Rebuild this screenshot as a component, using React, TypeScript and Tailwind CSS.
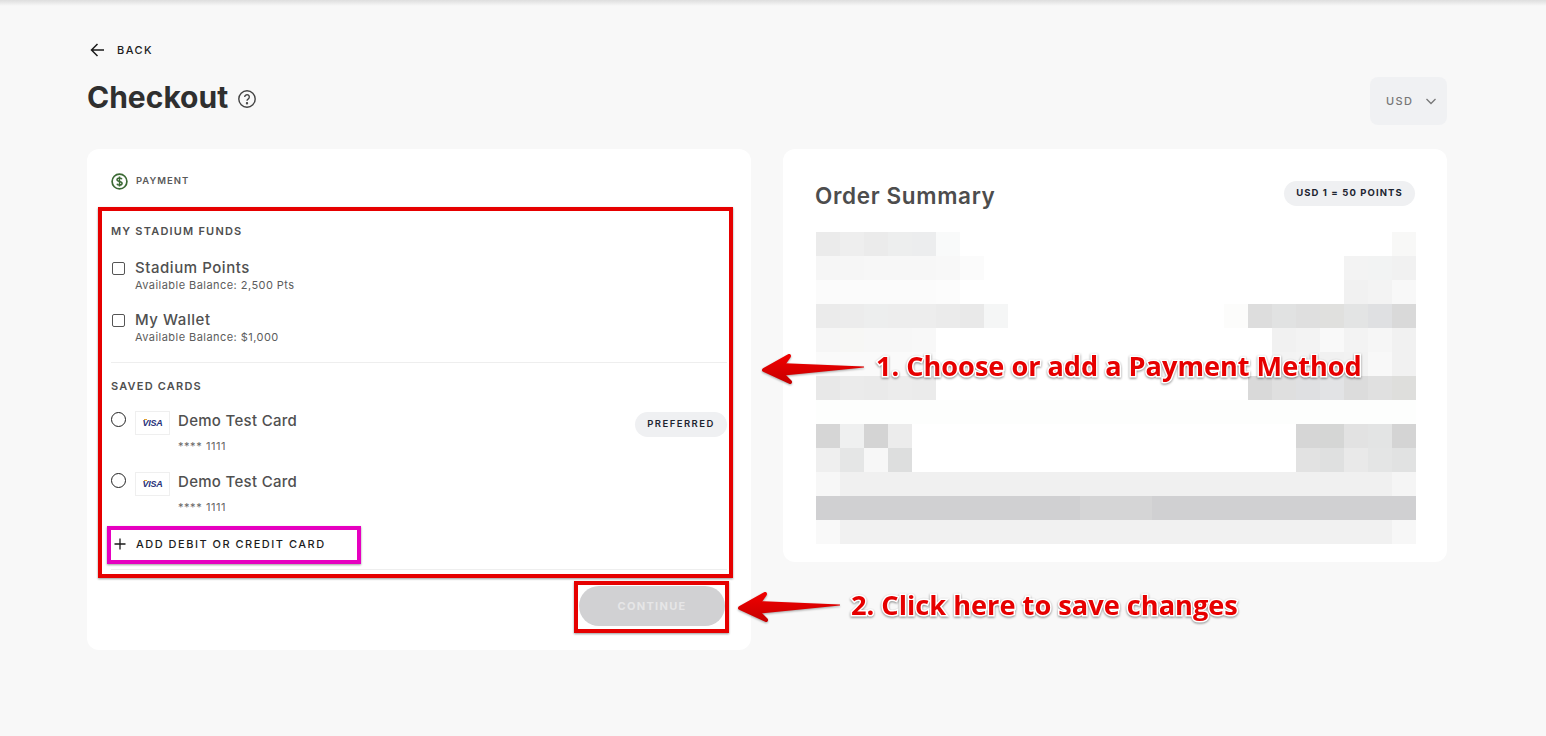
import { FC } from "react";

const FONT = "font-['Inter','Noto_Sans',sans-serif]";

// blurred order lines: [row, first column, colours...]
const MOSAIC: [number, number, string[]][] = [
   [0, 0, ["#ebebeb", "#eeeeee", "#ebebeb", "#edeeee", "#ecedee", "#f9fafa"]],
   [0, 24, ["#f8f8f7"]],
   [1, 0, ["#f6f6f6", "#f6f6f6", "#f7f7f7", "#f7f7f7", "#f7f7f7", "#f8f8f8", "#fbfbfb"]],
   [1, 22, ["#f3f3f3", "#f2f3f3", "#f1f1f1"]],
   [2, 0, ["#fbfbfb", "#fbfbfb", "#fbfbfb", "#fbfbfb", "#fbfbfb", "#fcfcfc"]],
   [2, 22, ["#f1f1f1", "#f3f3f3", "#f8f8f8"]],
   [3, 0, ["#ebebeb", "#ececec", "#edeeee", "#ededed", "#ededed", "#ebebeb", "#e9e9e9", "#f5f6f6"]],
   [3, 17, ["#fcfcfb", "#dddddd", "#e1e2e2", "#dfdfdf", "#e0e0de", "#e3e4e4", "#dfe0e2", "#d9d9d9"]],
   [4, 0, ["#f6f6f6", "#f7f7f5", "#f7f7f7", "#f7f7f7", "#f8f8f8"]],
   [4, 19, ["#f1f1f1", "#f3f3f3", "#f9f9f9", "#f3f3f3", "#f6f6f6", "#f1f1f1"]],
   [5, 0, ["#fafafa", "#fafafa", "#fafafa", "#fafafa", "#fbfbfb"]],
   [5, 19, ["#f3f3f3", "#f4f4f4", "#f1f1f1", "#f2f2f2", "#f8f8f8", "#f1f1f1"]],
   [6, 0, ["#e8e8e8", "#ebebeb", "#eaeaea", "#ececec", "#ebebeb"]],
   [6, 18, ["#d9d9d9", "#dfdfdf", "#dfe0e2", "#e2e3e5", "#dcdcdc", "#e0e0e0", "#dededc"]],
   [7, 0, Array(25).fill("#fdfefd")],
   [8, 0, ["#d6d6d6", "#eff0f0", "#d4d4d4", "#ececec"]],
   [8, 20, ["#d6d6d6", "#d5d6d5", "#e2e2e2", "#e3e4e4", "#d4d4d4"]],
   [9, 0, ["#efefef", "#e5e6e6", "#f7f7f7", "#dddede"]],
   [9, 20, ["#e2e2e2", "#dfe0e0", "#e9e9e9", "#e4e5e5", "#e1e2e2"]],
   [10, 0, ["#f7f7f7", ...Array(23).fill("#f0f0f0"), "#f5f5f5"]],
   [11, 0, [...Array(11).fill("#d0d0d2"), "#d5d5d6", "#d5d5d6", "#d5d5d6", ...Array(11).fill("#d0d0d2")]],
   [12, 0, ["#f9f9f9", ...Array(23).fill("#f1f1f1"), "#f7f7f7"]],
];

const Mosaic: FC = () => (
   <svg width="600" height="312" viewBox="0 0 600 312" className="block" shapeRendering="crispEdges">
      {MOSAIC.map(([row, start, colours]) =>
         colours.map((c, i) => <rect key={`${row}-${start}-${i}`} x={(start + i) * 24} y={row * 24} width="24" height="24" fill={c} />)
      )}
   </svg>
);

const SectionLabel: FC<{ text: string }> = ({ text }) => (
   <div className="text-[11px] leading-4 font-semibold tracking-[1.2px] text-[#4f4f4f]">{text}</div>
);

const FundRow: FC<{ name: string; balance: string }> = ({ name, balance }) => (
   <div className="flex items-start h-[52px]">
      <div className="w-[13px] h-[13px] mt-[3px] ml-[1px] mr-[10px] rounded-[2px] border-[1.5px] border-[#555555]" />
      <div>
         <div className="text-[15px] leading-[18px] font-medium tracking-[0.55px] text-[#505050]">{name}</div>
         <div className="text-[11px] leading-4 tracking-[0.45px] text-[#5c5c5c]">{balance}</div>
      </div>
   </div>
);

const CardRow: FC<{ preferred?: boolean }> = ({ preferred }) => (
   <div className="flex items-start h-[61px]">
      <div className="w-[15px] h-[15px] mt-[1px] mr-[9px] rounded-full border-[1.5px] border-[#222222]" />
      <div className="relative w-[35px] h-[24px] border border-[#efefef] flex items-center justify-center mr-2">
         <span className="text-[9px] leading-none font-bold italic tracking-[-0.2px] text-[#27327a] font-['Liberation_Sans',sans-serif]">VISA</span>
         <span className="absolute left-[8px] top-[7px] w-[3px] h-[1px] bg-[#e0a030]" />
      </div>
      <div>
         <div className="text-[15px] leading-[18px] font-medium tracking-[0.3px] text-[#505050] mt-[1px]">Demo Test Card</div>
         <div className="text-[11px] leading-4 tracking-[0.55px] text-[#666666] mt-[8px]">**** 1111</div>
      </div>
      {preferred && (
         <div className="ml-auto mt-[1px] h-[25px] w-[92px] rounded-full bg-[#eff0f2] flex items-center justify-center text-[9.5px] font-semibold tracking-[1.45px] text-[#1d2430]">
            PREFERRED
         </div>
      )}
   </div>
);

const Arrow: FC<{ x: number; y: number; tail: number; id: string }> = ({ x, y, tail, id }) => (
   <g transform={`translate(${x} ${y})`} className="[filter:drop-shadow(0_1px_1px_rgba(0,0,0,0.35))]">
      <defs>
         <linearGradient id={id} gradientUnits="userSpaceOnUse" x1="0" y1="-16" x2="0" y2="15">
            <stop offset="0" stopColor="#f20000" />
            <stop offset="1" stopColor="#c40000" />
         </linearGradient>
      </defs>
      <path d={`M18 -7L${tail} -3.500L${tail} -2.500L18 6z`} fill={`url(#${id})`} />
      <path d="M3 0L28 -14L21 -4L21 4L29 12z" fill={`url(#${id})`} stroke={`url(#${id})`} strokeWidth="4" strokeLinejoin="round" />
   </g>
);

const App: FC = () => {
   return (
      <div className={`relative min-h-[736px] bg-[#f8f8f8] overflow-hidden ${FONT}`}>
         <div className="h-[6px] bg-linear-to-b from-[#dedede] to-[#f8f8f8]" />
         <div className="w-[1360px] ml-[87px]">
            <div className="flex items-center h-[16px] mt-[36px]">
               <svg width="20" height="20" viewBox="0 0 20 20" fill="none" stroke="#1a1a1a" strokeWidth="1.5" className="ml-[1px]">
                  <path d="M16 10H3.5M9.5 4l-6 6 6 6" />
               </svg>
               <span className="ml-[9px] text-[11px] font-medium tracking-[1.45px] text-[#1c1c1c]">BACK</span>
            </div>
            <div className="flex items-start justify-between h-[76px] mt-[15px]">
               <div className="flex items-center h-[48px]">
                  <h1 className="text-[30px] leading-[40px] font-bold text-[#2f2f2f]">Checkout</h1>
                  <svg width="20" height="20" viewBox="0 0 20 20" fill="none" stroke="#444444" strokeWidth="1.4" className="ml-[9px] mt-[3px]">
                     <circle cx="10" cy="10" r="8.2" />
                     <path d="M7.7 8a2.3 2.3 0 1 1 3.6 1.9c-.8.5-1.3 1-1.3 1.9" />
                     <circle cx="10" cy="14.2" r=".5" fill="#444444" />
                  </svg>
               </div>
               <div className="w-[77px] h-[48px] mt-[4px] rounded-lg bg-[#f0f1f3] flex items-center pl-[16px] text-[11px] font-medium tracking-[1.4px] text-[#777777]">
                  USD
                  <svg width="12" height="12" viewBox="0 0 12 12" fill="none" stroke="#777777" strokeWidth="1.3" className="ml-[12px]">
                     <path d="M1.5 4l4.5 4.5L10.500 4" />
                  </svg>
               </div>
            </div>
            <div className="flex items-start gap-8">
               <div className="w-[664px] h-[501px] bg-white rounded-xl px-6 pt-[23px]">
                  <div className="flex items-center h-[18px]">
                     <svg width="17" height="17" viewBox="0 0 17 17" fill="none" stroke="#3c6a35" strokeWidth="1.7">
                        <circle cx="8.500" cy="8.500" r="7.400" />
                        <path d="M11 6.300c-.4-.9-1.300-1.300-2.500-1.300-1.400 0-2.500.6-2.500 1.800 0 2.500 5.100 1 5.100 3.500 0 1.200-1.200 1.800-2.600 1.800-1.200 0-2.200-.5-2.600-1.400M8.500 3.500v10" strokeWidth="1.500" />
                     </svg>
                     <span className="ml-2 text-[9.500px] font-semibold tracking-[1px] text-[#5a5a5a]">PAYMENT</span>
                  </div>
                  <div className="mt-[33px]">
                     <SectionLabel text="MY STADIUM FUNDS" />
                     <div className="mt-[20px]">
                        <FundRow name="Stadium Points" balance="Available Balance: 2,500 Pts" />
                        <FundRow name="My Wallet" balance="Available Balance: $1,000" />
                     </div>
                     <div className="h-px bg-[#eeeeee] -mt-[1px]" />
                     <div className="mt-[15px]">
                        <SectionLabel text="SAVED CARDS" />
                     </div>
                     <div className="mt-[17px]">
                        <CardRow preferred />
                        <CardRow />
                     </div>
                     <div className="flex items-center h-[18px] mt-[2px]">
                        <svg width="14" height="14" viewBox="0 0 14 14" stroke="#1a1a1a" strokeWidth="1.300" className="ml-[2px]">
                           <path d="M7 1.500v11M1.500 7h11" />
                        </svg>
                        <span className="ml-[9px] text-[11px] font-medium tracking-[1.5px] text-[#1c1c1c]">ADD DEBIT OR CREDIT CARD</span>
                     </div>
                     <div className="h-px bg-[#eeeeee] mt-[16px]" />
                  </div>
                  <div className="flex justify-end mt-[16px] pr-[2px]">
                     <button className="w-[146px] h-[40px] rounded-full bg-[#d1d1d3] text-[11px] font-bold tracking-[1.3px] text-[#e6e6e7]">CONTINUE</button>
                  </div>
               </div>
               <div className="w-[664px] h-[413px] bg-white rounded-xl">
                  <div className="flex items-center justify-between h-[83px] pl-8 pr-8">
                     <h2 className="text-[22.500px] font-semibold tracking-[0.65px] text-[#4d4d4d] mt-[11px]">Order Summary</h2>
                     <div className="h-[25px] w-[131px] mt-[6px] rounded-full bg-[#eff0f2] flex items-center justify-center text-[9.500px] font-bold tracking-[1.1px] text-[#1d2430]">
                        USD 1 = 50 POINTS
                     </div>
                  </div>
                  <div className="ml-[33px]">
                     <Mosaic />
                  </div>
               </div>
            </div>
         </div>

         {/* annotation layer painted over the page */}
         <div className="absolute left-[98px] top-[207px] w-[635px] h-[371px] border-[4px] border-[#e60000] shadow-[0_1px_2px_rgba(0,0,0,0.4)]" />
         <div className="absolute left-[107px] top-[526px] w-[254px] h-[38px] border-[4px] border-[#e600c0] shadow-[0_1px_2px_rgba(0,0,0,0.4)]" />
         <div className="absolute left-[574px] top-[581px] w-[155px] h-[52px] border-[4px] border-[#e60000] shadow-[0_1px_2px_rgba(0,0,0,0.4)]" />
         <svg width="1546" height="736" className="absolute left-0 top-0 pointer-events-none">
            <Arrow x={761} y={370} tail={103} id="arrowOne" />
            <Arrow x={737} y={608} tail={103} id="arrowTwo" />
         </svg>
         <div className="absolute left-[876px] top-[346px] text-[27.1px] leading-10 font-bold text-[#e60000] font-['Open_Sans',sans-serif] [-webkit-text-stroke:3px_#ffffff] [paint-order:stroke_fill] [filter:drop-shadow(0_1px_1px_rgba(0,0,0,0.45))] whitespace-nowrap">
            1. Choose or add a Payment Method
         </div>
         <div className="absolute left-[851px] top-[585px] text-[27.2px] leading-10 font-bold text-[#e60000] font-['Open_Sans',sans-serif] [-webkit-text-stroke:3px_#ffffff] [paint-order:stroke_fill] [filter:drop-shadow(0_1px_1px_rgba(0,0,0,0.45))] whitespace-nowrap">
            2. Click here to save changes
         </div>
      </div>
   );
};

export default App;
